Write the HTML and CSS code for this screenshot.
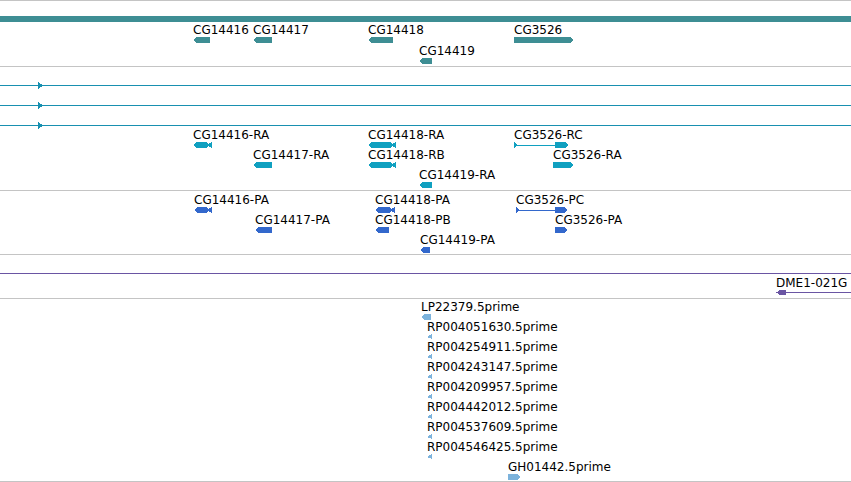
FILE: index.html
```
<!DOCTYPE html>
<html lang="en">
<head>
    <meta charset="UTF-8">
    <title>Genome Browser - CG14416 region</title>
    <link rel="stylesheet" href="styles.css">
</head>
<body>
    <div class="browser">
        <!-- gene track -->
        <div class="track track-genes">
            <div class="contig"></div>
            <div class="feat" style="left:193px; top:22px"><span class="label">CG14416</span><svg width="17" height="6"><polygon points="0,3 3,0 17,0 17,6 3,6"/></svg></div>
            <div class="feat" style="left:253px; top:22px"><span class="label">CG14417</span><svg width="19" height="6"><polygon points="0,3 3,0 19,0 19,6 3,6"/></svg></div>
            <div class="feat" style="left:368px; top:22px"><span class="label">CG14418</span><svg width="25" height="6"><polygon points="0,3 3,0 25,0 25,6 3,6"/></svg></div>
            <div class="feat" style="left:419px; top:43px"><span class="label">CG14419</span><svg width="13" height="6"><polygon points="0,3 3,0 13,0 13,6 3,6"/></svg></div>
            <div class="feat" style="left:514px; top:22px"><span class="label">CG3526</span><svg width="59" height="6"><polygon points="0,0 56,0 59,3 56,6 0,6"/></svg></div>
        </div>

        <!-- transcripts -->
        <div class="track track-transcripts">
            <div class="feat" style="left:0; top:15px"><svg width="851" height="7"><rect x="0" y="3" width="851" height="1"/><polygon points="38,0 43,3.5 38,7"/></svg></div>
            <div class="feat" style="left:0; top:35px"><svg width="851" height="7"><rect x="0" y="3" width="851" height="1"/><polygon points="38,0 43,3.5 38,7"/></svg></div>
            <div class="feat" style="left:0; top:55px"><svg width="851" height="7"><rect x="0" y="3" width="851" height="1"/><polygon points="38,0 43,3.5 38,7"/></svg></div>

            <div class="feat" style="left:193px; top:61px"><span class="label">CG14416-RA</span><svg width="19" height="6"><polygon points="0,3 3,0 13,0 15,2 19,0 19,6 15,4 13,6 3,6"/></svg></div>
            <div class="feat" style="left:253px; top:81px"><span class="label">CG14417-RA</span><svg width="19" height="6"><polygon points="0,3 3,0 19,0 19,6 3,6"/></svg></div>
            <div class="feat" style="left:368px; top:61px"><span class="label">CG14418-RA</span><svg width="28" height="6"><polygon points="0,3 3,0 22,0 24,2 28,0 28,6 24,4 22,6 3,6"/></svg></div>
            <div class="feat" style="left:368px; top:81px"><span class="label">CG14418-RB</span><svg width="28" height="6"><polygon points="0,3 3,0 22,0 24,2 28,0 28,6 24,4 22,6 3,6"/></svg></div>
            <div class="feat" style="left:419px; top:101px"><span class="label">CG14419-RA</span><svg width="13" height="6"><polygon points="0,3 3,0 13,0 13,6 3,6"/></svg></div>
            <div class="feat" style="left:514px; top:61px"><span class="label">CG3526-RC</span><svg width="54" height="6"><polygon points="0,0 4,3 0,6"/><rect x="0" y="3" width="41" height="1"/><polygon points="41,0 51,0 54,3 51,6 41,6"/></svg></div>
            <div class="feat" style="left:553px; top:81px"><span class="label">CG3526-RA</span><svg width="20" height="6"><polygon points="0,0 17,0 20,3 17,6 0,6"/></svg></div>
        </div>

        <!-- proteins -->
        <div class="track track-proteins">
            <div class="feat" style="left:194px; top:2px"><span class="label">CG14416-PA</span><svg width="18" height="6"><polygon points="0,3 3,0 12,0 14,2 18,0 18,6 14,4 12,6 3,6"/></svg></div>
            <div class="feat" style="left:255px; top:22px"><span class="label">CG14417-PA</span><svg width="17" height="6"><polygon points="0,3 3,0 17,0 17,6 3,6"/></svg></div>
            <div class="feat" style="left:375px; top:2px"><span class="label">CG14418-PA</span><svg width="20" height="6"><polygon points="0,3 3,0 14,0 16,2 20,0 20,6 16,4 14,6 3,6"/></svg></div>
            <div class="feat" style="left:375px; top:22px"><span class="label">CG14418-PB</span><svg width="14" height="6"><polygon points="0,3 3,0 14,0 14,6 3,6"/></svg></div>
            <div class="feat" style="left:420px; top:42px"><span class="label">CG14419-PA</span><svg width="10" height="6"><polygon points="0,3 3,0 10,0 10,6 3,6"/></svg></div>
            <div class="feat" style="left:516px; top:2px"><span class="label">CG3526-PC</span><svg width="51" height="6"><polygon points="0,0 4,3 0,6"/><rect x="0" y="3" width="39" height="1"/><polygon points="39,0 48,0 51,3 48,6 39,6"/></svg></div>
            <div class="feat" style="left:555px; top:22px"><span class="label">CG3526-PA</span><svg width="12" height="6"><polygon points="0,0 9,0 12,3 9,6 0,6"/></svg></div>
        </div>

        <!-- other -->
        <div class="track track-other">
            <div class="feat" style="left:0; top:18px"><svg width="851" height="1"><rect x="0" y="0" width="851" height="1"/></svg></div>
            <div class="feat" style="left:776px; top:21px"><span class="label">DME1-021G</span><svg width="75" height="5"><polygon points="0,2.5 4,0 10,0 10,5 4,5"/><rect x="10" y="2" width="65" height="1"/></svg></div>
        </div>

        <!-- ESTs -->
        <div class="track track-ests">
            <div class="feat" style="left:421px; top:1px"><span class="label">LP22379.5prime</span><svg width="10" height="6"><polygon points="0,3 3,0 10,0 10,6 3,6"/></svg></div>
            <div class="feat" style="left:427px; top:21px"><span class="label">RP004051630.5prime</span><svg width="5" height="5"><polygon points="0,3 5,0 5,5"/></svg></div>
            <div class="feat" style="left:427px; top:41px"><span class="label">RP004254911.5prime</span><svg width="5" height="5"><polygon points="0,3 5,0 5,5"/></svg></div>
            <div class="feat" style="left:427px; top:61px"><span class="label">RP004243147.5prime</span><svg width="5" height="5"><polygon points="0,3 5,0 5,5"/></svg></div>
            <div class="feat" style="left:427px; top:81px"><span class="label">RP004209957.5prime</span><svg width="5" height="5"><polygon points="0,3 5,0 5,5"/></svg></div>
            <div class="feat" style="left:427px; top:101px"><span class="label">RP004442012.5prime</span><svg width="5" height="5"><polygon points="0,3 5,0 5,5"/></svg></div>
            <div class="feat" style="left:427px; top:121px"><span class="label">RP004537609.5prime</span><svg width="5" height="5"><polygon points="0,3 5,0 5,5"/></svg></div>
            <div class="feat" style="left:427px; top:141px"><span class="label">RP004546425.5prime</span><svg width="5" height="5"><polygon points="0,3 5,0 5,5"/></svg></div>
            <div class="feat" style="left:508px; top:161px"><span class="label">GH01442.5prime</span><svg width="12" height="6"><polygon points="0,0 9,0 12,3 9,6 0,6"/></svg></div>
        </div>
    </div>
</body>
</html>
```
FILE: styles.css
```
body { margin: 0; background: #fff; color: #000; font-family: "DejaVu Sans", sans-serif; font-size: 12px; }
.browser { width: 851px; border-top: 1px solid #c4c4c4; overflow: hidden; }
.track { position: relative; border-bottom: 1px solid #c4c4c4; }
.track-genes { height: 50px; padding-top: 15px; }
.track-transcripts { height: 123px; }
.track-proteins { height: 63px; }
.track-other { height: 43px; }
.track-ests { height: 182px; }
.contig { height: 6px; background: #3e8e94; }
.feat { position: absolute; white-space: nowrap; }
.feat .label { display: block; line-height: 14px; }
.feat svg { display: block; shape-rendering: crispEdges; }
.track-genes svg { fill: #3e8e94; }
.track-transcripts svg { fill: #10a0c0; }
.track-transcripts .feat:nth-child(-n+3) svg { fill: #1890b0; }
.track-proteins svg { fill: #3368cc; }
.track-other svg { fill: #6a55a3; }
.track-ests svg { fill: #7db3dc; }
```
